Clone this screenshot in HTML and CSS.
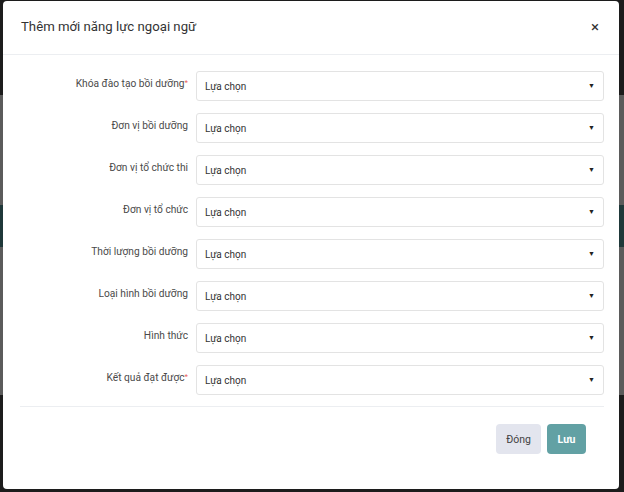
FILE: index.html
```html
<!DOCTYPE html>
<html lang="vi">
<head>
<meta charset="utf-8">
<title>Thêm mới năng lực ngoại ngữ</title>
<link rel="stylesheet" href="styles.css">
</head>
<body>
<div class="backdrop">
  <div class="band band-dark-top"></div>
  <div class="band band-gray"></div>
  <div class="band band-teal"></div>
  <div class="band band-gray2"></div>
  <div class="band band-dark"></div>
</div>
<div class="modal">
  <div class="modal-header">
    <h1 class="modal-title">Thêm mới năng lực ngoại ngữ</h1>
    <span class="close">×</span>
  </div>
  <div class="modal-body">
    <div class="form-row"><label class="label">Khóa đào tạo bồi dưỡng<span class="req">*</span></label><div class="select"><span>Lựa chọn</span><span class="caret">▼</span></div></div>
    <div class="form-row"><label class="label">Đơn vị bồi dưỡng</label><div class="select"><span>Lựa chọn</span><span class="caret">▼</span></div></div>
    <div class="form-row"><label class="label">Đơn vị tổ chức thi</label><div class="select"><span>Lựa chọn</span><span class="caret">▼</span></div></div>
    <div class="form-row"><label class="label">Đơn vị tổ chức</label><div class="select"><span>Lựa chọn</span><span class="caret">▼</span></div></div>
    <div class="form-row"><label class="label">Thời lượng bồi dưỡng</label><div class="select"><span>Lựa chọn</span><span class="caret">▼</span></div></div>
    <div class="form-row"><label class="label">Loại hình bồi dưỡng</label><div class="select"><span>Lựa chọn</span><span class="caret">▼</span></div></div>
    <div class="form-row"><label class="label">Hình thức</label><div class="select"><span>Lựa chọn</span><span class="caret">▼</span></div></div>
    <div class="form-row"><label class="label">Kết quả đạt được<span class="req">*</span></label><div class="select"><span>Lựa chọn</span><span class="caret">▼</span></div></div>
  </div>
  <div class="modal-footer">
    <button class="btn btn-close">Đóng</button>
    <button class="btn btn-save">Lưu</button>
  </div>
</div>
</body>
</html>
```
FILE: styles.css
```css
html, body {
  margin: 0;
  padding: 0;
  width: 624px;
  height: 492px;
  overflow: hidden;
  font-family: Roboto, "Liberation Sans", Arial, sans-serif;
}
.backdrop {
  display: flex;
  flex-direction: column;
  height: 492px;
}
.band-dark-top { height: 95px; background: #1c1c1c; }
.band-gray { height: 110px; background: #5b5b5b; }
.band-teal { height: 42px; background: #1f3839; }
.band-gray2 { height: 148px; background: #5b5b5b; }
.band-dark { flex: 1; background: #1c1c1c; }

.modal {
  position: absolute;
  left: 3px;
  top: 1px;
  width: 616px;
  height: 488px;
  background: #fff;
  border-radius: 4px;
  box-sizing: border-box;
}
.modal-header {
  height: 54px;
  box-sizing: border-box;
  border-bottom: 1px solid #eceef1;
  display: flex;
  align-items: center;
  justify-content: space-between;
  padding: 0 20px 2px 18px;
}
.modal-title {
  margin: 0;
  font-size: 13.2px;
  font-weight: normal;
  color: #333;
}
.close {
  font-size: 15px;
  color: #333;
  font-weight: normal;
}
.modal-body {
  padding: 16px 15px 0 17px;
  display: flex;
  flex-direction: column;
  gap: 12px;
}
.form-row {
  display: grid;
  grid-template-columns: 176px 1fr;
  align-items: start;
}
.label {
  text-align: right;
  padding-right: 8px;
  padding-top: 7px;
  font-size: 10.2px;
  color: #4a4a4a;
}
.req { color: #ec5a5a; font-size: 8px; vertical-align: 2px; }
.select {
  height: 30px;
  box-sizing: border-box;
  border: 1px solid #e3e3e3;
  border-radius: 3px;
  display: flex;
  align-items: center;
  justify-content: space-between;
  padding: 0 8px 0 8px;
  font-size: 10px;
  color: #333;
}
.caret { font-size: 7px; color: #222; }
.modal-footer {
  margin: 11px 15px 0 17px;
  border-top: 1px solid #eceef1;
  padding-top: 17px;
  display: flex;
  justify-content: flex-end;
  gap: 6px;
  padding-right: 18px;
}
.btn {
  height: 30px;
  border: none;
  border-radius: 4px;
  font-family: Roboto, "Liberation Sans", Arial, sans-serif;
  font-size: 10.5px;
  padding: 0;
  cursor: pointer;
}
.btn-close { background: #e3e5ee; color: #444; width: 45px; }
.btn-save { background: #62a1a4; color: #fff; font-weight: bold; width: 39px; }
```
